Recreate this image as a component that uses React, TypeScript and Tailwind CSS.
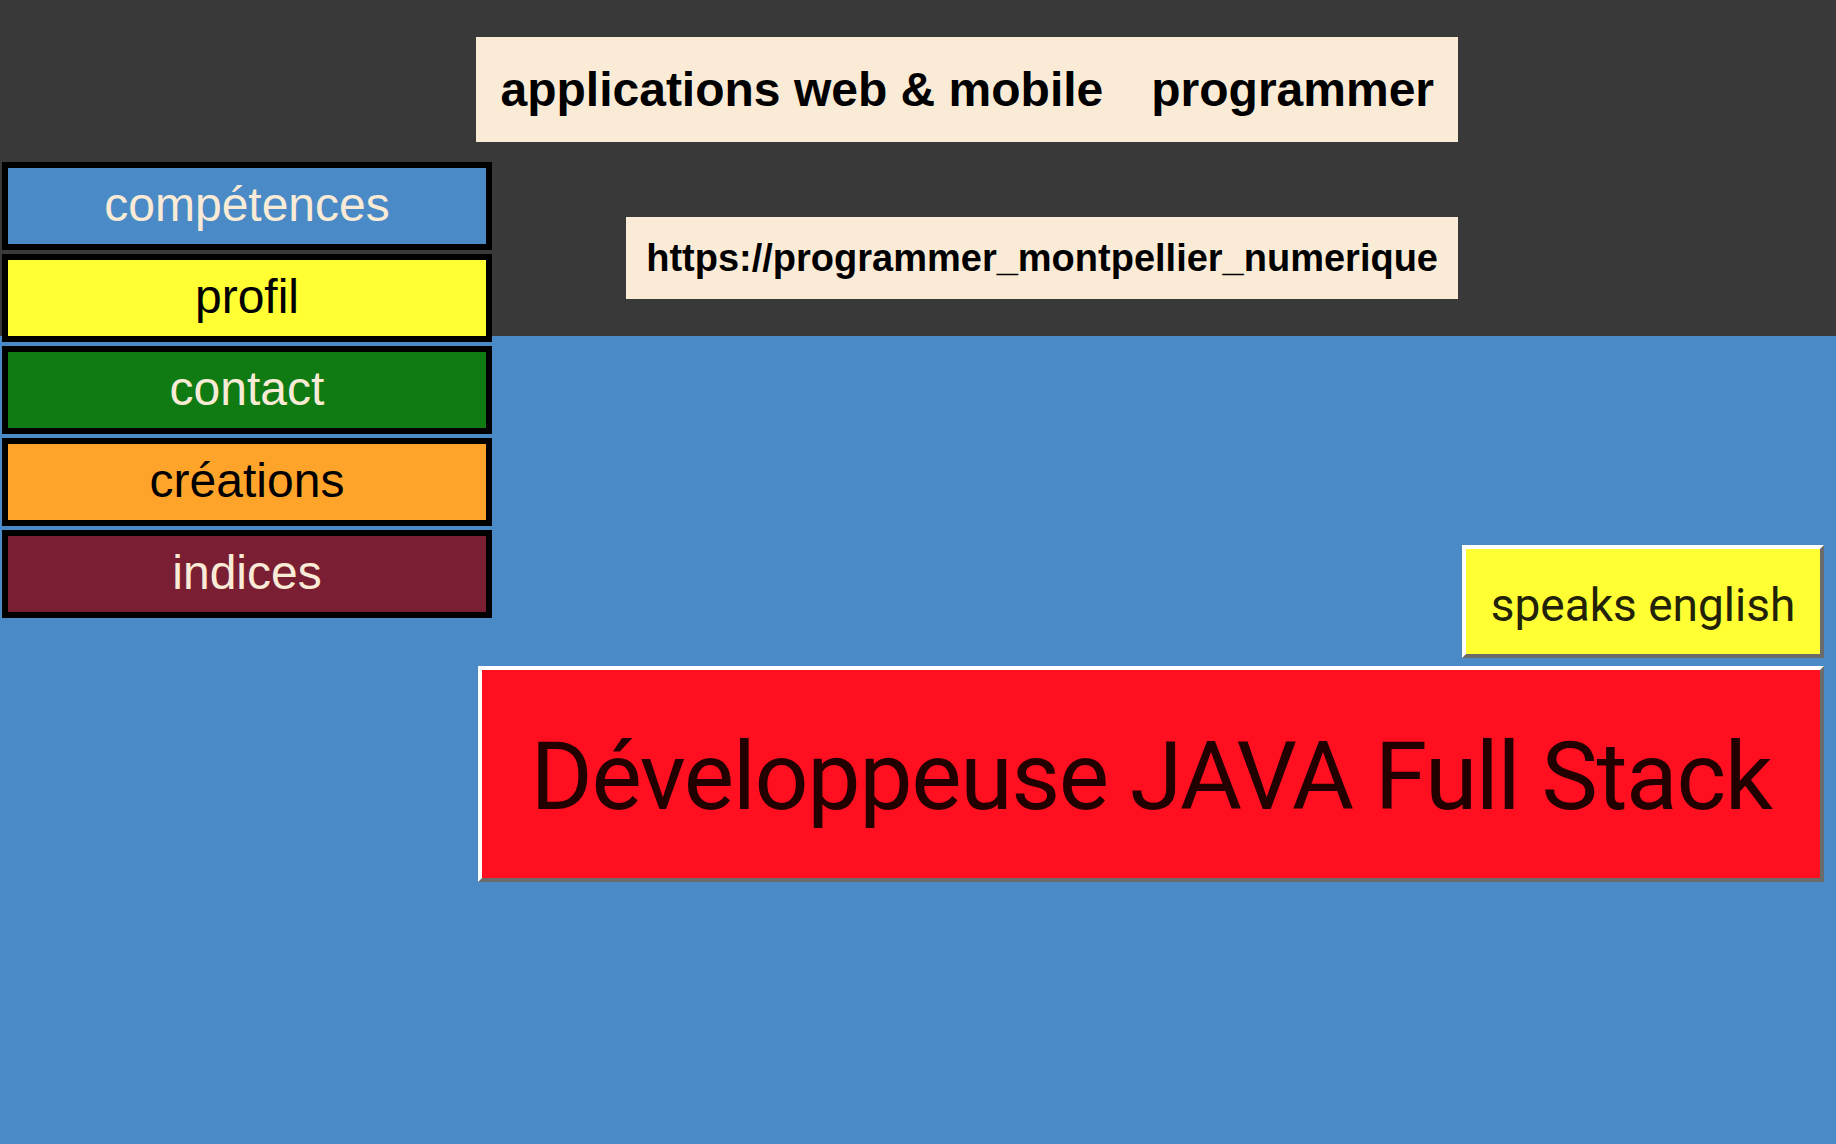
import React from "react";

const navItems = [
  { label: "compétences", cls: "bg-[#4a8ac6] text-[#faebd7]" },
  { label: "profil", cls: "bg-[#ffff33] text-black" },
  { label: "contact", cls: "bg-[#0f7b12] text-[#faebd7]" },
  { label: "créations", cls: "bg-[#ffa42b] text-black" },
  { label: "indices", cls: "bg-[#7a1f33] text-[#faebd7]" },
];

export default function App() {
  return (
    <div className="min-h-[1144px] w-full bg-[#4a8ac6] font-['Liberation_Sans',Arial,sans-serif]">
      <header className="flex h-[336px] w-full items-start bg-[#393939]">
        <nav className="flex w-[492px] shrink-0 flex-col gap-[4px] pl-[2px] pt-[162px]">
          {navItems.map((item) => (
            <div
              key={item.label}
              className={`flex h-[88px] shrink-0 items-center justify-center border-[6px] border-black text-[48px] leading-none ${item.cls}`}
            >
              <span className="pb-[2px]">{item.label}</span>
            </div>
          ))}
        </nav>
        <div className="flex min-w-0 flex-1 flex-col items-end gap-[75px] pr-[378px] pt-[37px]">
          <div className="flex shrink-0 gap-[48px] whitespace-nowrap bg-[#faebd7] px-[24px] py-[25px] text-[48px] font-bold leading-[55px] text-black">
            <span>applications web &amp; mobile</span>
            <span>programmer</span>
          </div>
          <div className="shrink-0 whitespace-nowrap bg-[#faebd7] px-[20px] py-[19px] text-[38px] font-bold leading-[44px] text-black">
            https://programmer_montpellier_numerique
          </div>
        </div>
      </header>
      <main className="flex flex-col items-end gap-2 pr-[12px] pt-[209px] font-['Roboto',sans-serif]">
        <div className="flex h-[113px] w-[362px] items-center justify-center border-4 border-t-white border-l-white border-b-[#6b6b6b] border-r-[#6b6b6b] bg-[#ffff33] text-[46px] leading-none text-[#222208]">
          <span className="pt-[6px]">speaks english</span>
        </div>
        <div className="flex h-[216px] w-[1346px] items-center justify-center border-4 border-t-white border-l-white border-b-[#6b6b6b] border-r-[#6b6b6b] bg-[#ff0f1f] text-[95px] leading-none tracking-[-1.4px] text-[#220000]">
          <span className="pt-[4px]">Développeuse JAVA Full Stack</span>
        </div>
      </main>
    </div>
  );
}
